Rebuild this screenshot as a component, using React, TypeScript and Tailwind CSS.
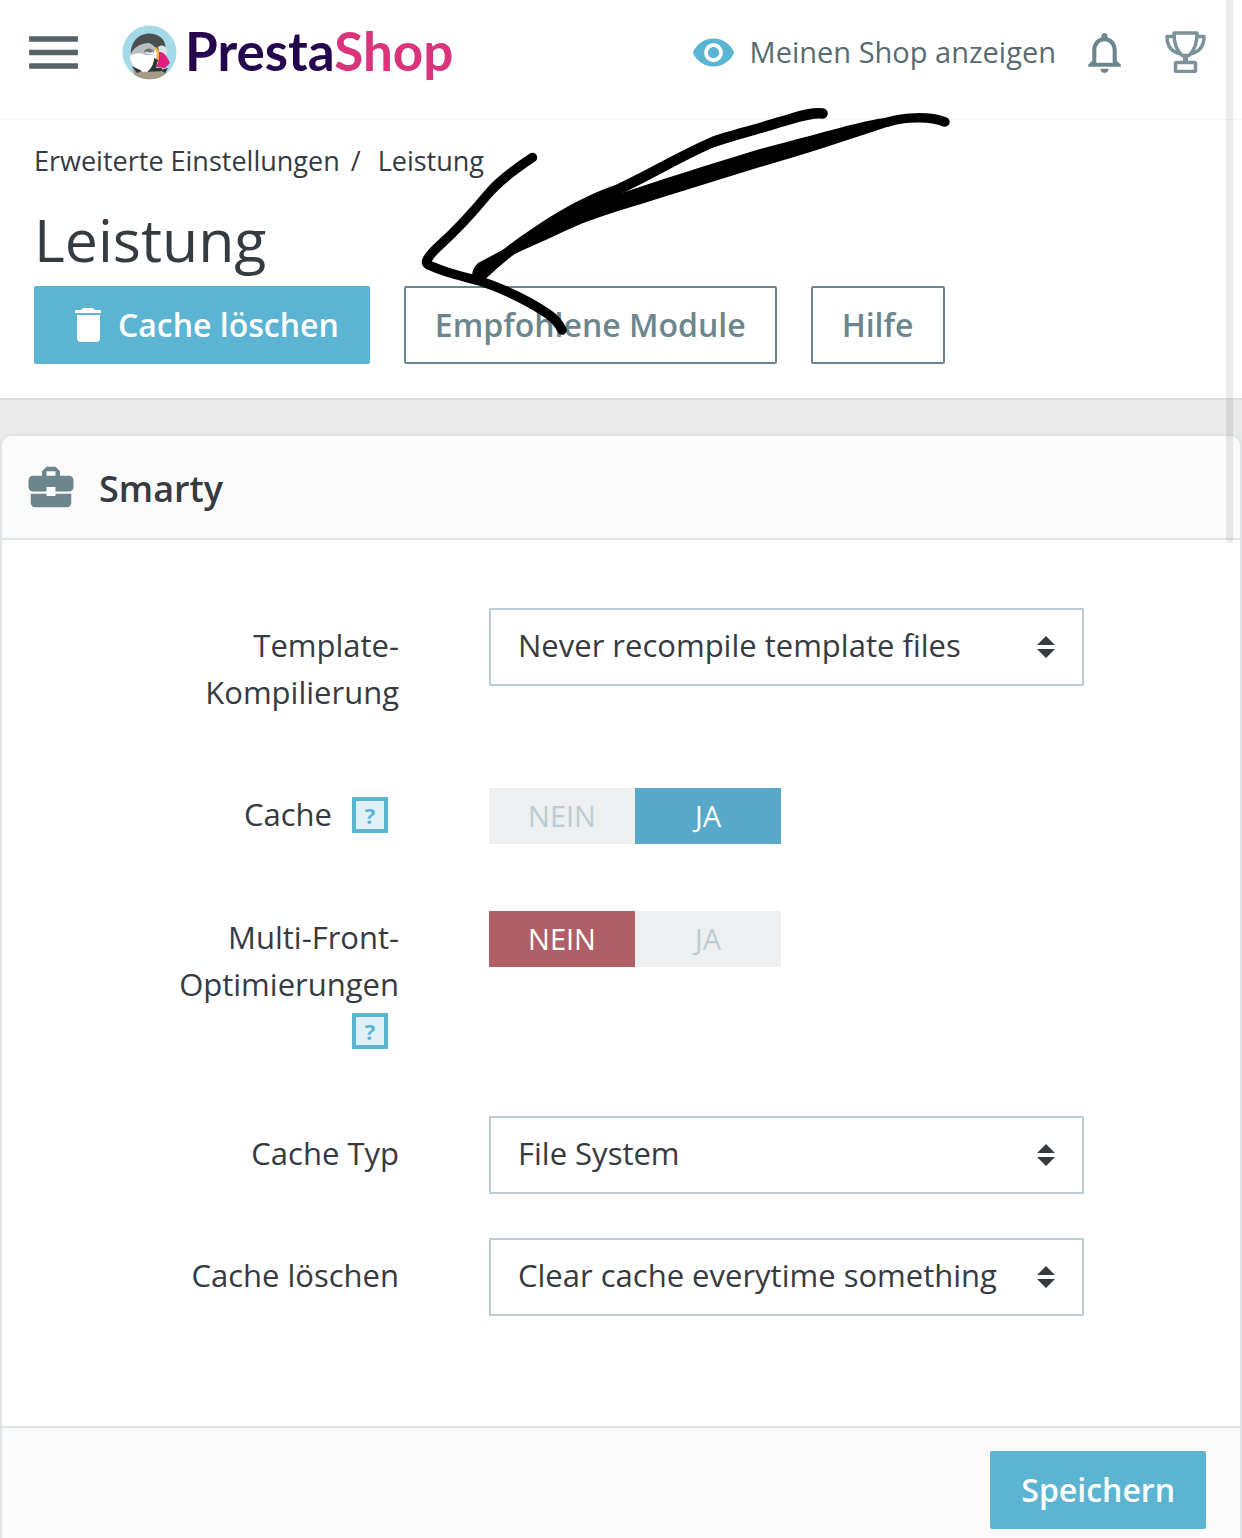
import React, { useState } from 'react';
import { MdBusinessCenter, MdMenu, MdNotificationsNone, MdVisibility } from 'react-icons/md';

interface SelectRowProps {
  id: string;
  label: string;
  options: string[];
}

interface SwitchRowProps {
  name: string;
  label: string;
  initial: boolean;
}

const rowBase = "grid grid-cols-[241fr_595fr] gap-[90px]";
const labelBase = "pt-[14px] pb-[17px] text-right leading-[47px]";
const buttonBase = "h-[78px] px-[29px] flex items-center border-2 rounded-[2px] text-[32px] font-semibold";

const PuffinLogo: React.FC = () => (
  <svg className="w-[55px] h-[55px]" viewBox="0 0 55 55" aria-hidden="true">
    <defs>
      <clipPath id="puffin-clip"><circle cx="27.5" cy="27.5" r="27" /></clipPath>
    </defs>
    <g clipPath="url(#puffin-clip)">
      <rect width="55" height="55" fill="#a4d9e8" />
      <path d="M9 30C8 17 17 8 28 8.500C37 9 43 14 43.500 22L36 26L24 22L12 28Z" fill="#4b4f52" />
      <path d="M8 32C9 25 17 20 25 20C33 20 37 25 37 32C37 40 33 47 25 47C15 47 9 41 8 32Z" fill="#fff" />
      <path d="M8 31C11 23 18 18 27 18C30 19 33 21 33 25C32 30 28 31 24 30C20 28 14 27 8 31Z" fill="#b9bec2" />
      <path d="M22 26C25 22 30 23 32 27C29 30 25 30 22 26Z" fill="#6c7378" />
      <path d="M24 27Q28 30 31 27" fill="none" stroke="#fff" strokeWidth="1.500" />
      <path d="M36 22C41 18 46 22 45 30L38 31Z" fill="#dce3e7" />
      <path d="M32 23C35 26 36 31 33 36L36 37C39 32 38 26 34 22Z" fill="#f2b63c" />
      <path d="M37 27C42 26 46 33 48 38L43 43L34 42C37 37 37 32 37 27Z" fill="#df1f7b" />
      <path d="M32 33L36 35L34 43L40 43L39 47H25C29 44 32 39 32 33Z" fill="#303437" />
      <path d="M10 42L20 47L45 46L42 51Q28 58 13 51Z" fill="#a79b88" />
      <path d="M10 41L20 46L15 48ZM38 45L46 43L43 48Z" fill="#303437" />
    </g>
  </svg>
);

const TrophyIcon: React.FC = () => (
  <svg className="w-[41px] h-[42px]" viewBox="0 0 41 42" fill="none" stroke="#7b9299" strokeWidth="3.500" strokeLinejoin="round" aria-hidden="true">
    <path d="M9 2H32C32 13 29 20 24 24.500H17C12 20 9 13 9 2Z" />
    <path d="M9 5.500H2C2 14 6 21 16 23M32 5.500H39C39 14 35 21 25 23" />
    <path d="M20.500 24V31" strokeWidth="5" />
    <rect x="10.500" y="31.500" width="20" height="9" rx="1" />
  </svg>
);

const TrashIcon: React.FC = () => (
  <svg className="w-[28px] h-[36px]" viewBox="0 0 28 36" fill="currentColor" aria-hidden="true">
    <path d="M1 3H7Q8 1 11 1H17Q20 1 21 3H27V6H1ZM3 8H26V31Q26 35 22 35H7Q3 35 3 31Z" />
  </svg>
);

const HelpButton: React.FC = () => (
  <button type="button" aria-label="Hilfe anzeigen" className="inline-flex items-center justify-center align-middle w-9 h-9 mb-[6px] ml-3 mr-[11px] border-4 border-[#5bb5d2] bg-[#dff1f7] text-[#5bb5d2] text-[22px] leading-none font-bold">
    ?
  </button>
);

const SelectRow: React.FC<SelectRowProps> = ({ id, label, options }) => (
  <div className={rowBase}>
    <label htmlFor={id} className={labelBase}>{label}</label>
    <div className="relative h-[78px]">
      <select id={id} className="w-full h-full appearance-none border-2 border-[#bbcdd2] bg-white pl-[27px] pr-[70px] pb-1">
        {options.map(option => <option key={option}>{option}</option>)}
      </select>
      <svg className="absolute right-[29px] top-7 w-[18px] h-[22px] pointer-events-none" viewBox="0 0 18 22" fill="#363a41" aria-hidden="true">
        <path d="M9 0L18 9H0ZM0 13H18L9 22Z" />
      </svg>
    </div>
  </div>
);

const SwitchRow: React.FC<SwitchRowProps> = ({ name, label, initial }) => {
  const [active, setActive] = useState(initial);
  const option = "flex flex-1 items-center justify-center cursor-pointer";
  const inactive = "bg-[#eeeff1] text-[#bbcdd2]";

  return (
    <div className={rowBase}>
      <div className={labelBase}>
        <span id={`${name}-label`}>{label}</span> <HelpButton />
      </div>
      <div role="radiogroup" aria-labelledby={`${name}-label`} className="flex w-[292px] h-14 mt-[11px] text-[29px]">
        <label className={`${option} ${active ? inactive : 'bg-[#b05f67] text-white'}`}>
          <input type="radio" name={name} className="sr-only" checked={!active} onChange={() => setActive(false)} />
          NEIN
        </label>
        <label className={`${option} ${active ? 'bg-[#57a8c9] text-white' : inactive}`}>
          <input type="radio" name={name} className="sr-only" checked={active} onChange={() => setActive(true)} />
          JA
        </label>
      </div>
    </div>
  );
};

// Freehand arrow drawn on top of the page
const Arrow: React.FC = () => (
  <svg className="absolute left-[400px] top-[90px] w-[560px] h-[250px] pointer-events-none" viewBox="400 90 560 250" fill="none" stroke="#000" strokeWidth="9.500" strokeLinecap="round" strokeLinejoin="round" aria-hidden="true">
    <path d="M532.500 157.500C515 169 500 180 488 194C474 211 460 227 440 245Q430 254 427 260Q425 264 431 266C447 273 464 277 480 281C505 289 532 303 548 314Q557 320 562 330" />
    <path d="M822.500 113.500C812 112 798 117 780 122C755 130 730 136 713 142C680 156 650 175 617 190C585 201 560 216 535 233C515 246 500 258 481 276" strokeWidth="10.500" />
    <path d="M945 122C930 116 904 117 888 122" />
    <path d="M888 117.500C860 121 830 131 760 149C710 164 660 180 613 196C580 209 545 222 510 246L478 263C472 269 470 277 475 280L483 279L510 256C535 245 560 233 583 223C610 213 635 206 660 198L760 167C800 156 850 139 890 126Z" fill="#000" stroke="none" />
  </svg>
);

const App: React.FC = () => {
  return (
    <div className="relative min-h-screen flex flex-col overflow-hidden bg-[#eaeaea] font-['Open_Sans',sans-serif] text-[31px] text-[#363a41]">
      <header className="flex items-center h-[120px] pl-[21px] pr-9 pb-[15px] bg-white border-b border-[#f5f5f5]">
        <button type="button" aria-label="Menü">
          <MdMenu size={65} color="#566265" />
        </button>
        <a href="#" className="flex items-center gap-2 ml-9">
          <PuffinLogo />
          <span className="pb-1 font-['Lato',sans-serif] font-bold text-[53px] leading-none text-[#25054d]">
            Presta<span className="text-[#d9347c]">Shop</span>
          </span>
        </a>
        <a href="#" className="flex items-center gap-[14px] ml-auto text-[29px] text-[#576c72]">
          <MdVisibility size={45} color="#5bb5d2" />
          Meinen Shop anzeigen
        </a>
        <button type="button" aria-label="Benachrichtigungen" className="ml-6 mr-9">
          <MdNotificationsNone size={49} color="#6c868e" />
        </button>
        <button type="button" aria-label="Erfolge">
          <TrophyIcon />
        </button>
      </header>

      <section className="px-[34px] pt-[21px] pb-[34px] bg-white border-b-2 border-[#dedede]">
        <nav className="flex text-[27px] leading-10">
          <a href="#">Erweiterte Einstellungen</a>
          <span className="ml-[11px] mr-[17px]">/</span>
          <a href="#">Leistung</a>
        </nav>
        <h1 className="mt-4 text-[59px] leading-[84px]">Leistung</h1>
        <div className="flex gap-[34px] mt-[5px]">
          <button type="button" className={`${buttonBase} gap-4 pl-[38px] bg-[#5bb5d2] border-[#5bb5d2] text-white`}>
            <TrashIcon />
            Cache löschen
          </button>
          <button type="button" className={`${buttonBase} border-[#6c868e] text-[#6c868e]`}>Empfohlene Module</button>
          <button type="button" className={`${buttonBase} border-[#6c868e] text-[#6c868e]`}>Hilfe</button>
        </div>
      </section>

      <form className="flex flex-col flex-1 mt-[34px] bg-white border-2 border-b-0 border-[#dfe5e9] rounded-t-[12px] shadow-sm" onSubmit={e => e.preventDefault()}>
        <div className="flex items-center gap-[21px] h-[104px] pl-[22px] bg-[#fbfbfb] border-b-2 border-[#dfe5e9] rounded-t-[10px]">
          <MdBusinessCenter size={54} color="#6c868e" />
          <h2 className="pt-1 text-[36px] font-semibold">Smarty</h2>
        </div>

        <div className="flex flex-col gap-11 px-[156px] pt-[68px] pb-[110px]">
          <SelectRow id="compile" label="Template-Kompilierung" options={['Never recompile template files']} />
          <SwitchRow name="cache" label="Cache" initial={true} />
          <SwitchRow name="multi-front" label="Multi-Front-Optimierungen" initial={false} />
          <SelectRow id="cache-type" label="Cache Typ" options={['File System']} />
          <SelectRow id="clear-cache" label="Cache löschen" options={['Clear cache everytime something']} />
        </div>

        <div className="flex flex-1 items-start justify-end pt-[23px] pr-[34px] pb-2 bg-[#fafafa] border-t-2 border-[#dfe5e9]">
          <button type="submit" className={`${buttonBase} bg-[#5bb5d2] border-[#5bb5d2] text-white`}>Speichern</button>
        </div>
      </form>

      <div className="absolute right-[9px] top-0 w-[7px] h-[543px] rounded-b-full bg-black/8" />
      <Arrow />
    </div>
  );
};

export default App;
